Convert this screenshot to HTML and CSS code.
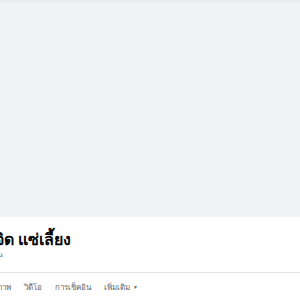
FILE: index.html
```html
<!DOCTYPE html>
<html>
<head>
    <title>เพจ</title>
    <link rel="stylesheet" href="styles.css">
</head>
<body>
    <div class="cover"></div>

    <div class="profile">
        <h1 class="name">จิด แซ่เลี้ยง</h1>
        <p class="sub">ผู้ใช้งาน</p>
    </div>

    <div class="tabs">
        <span class="tab">รูปภาพ</span>
        <span class="tab">วิดีโอ</span>
        <span class="tab">การเช็คอิน</span>
        <span class="tab">เพิ่มเติม<span class="caret">▼</span></span>
    </div>
</body>
</html>
```

FILE: styles.css
```css
body {
    margin: 0;
    background-color: #fff;
    font-family: "Noto Sans", "Liberation Sans", sans-serif;
    overflow: hidden;
}

.cover {
    height: 217px;
    background: linear-gradient(to bottom, #e9eaed 0, #f0f2f5 3px, #f0f2f5 100%);
}

.profile {
    height: 55px;
    border-bottom: 1px solid #e4e6eb;
    overflow: hidden;
}

.name {
    margin: 11px 0 0 -5px;
    font-size: 16px;
    font-weight: bold;
    color: #050505;
    line-height: 22px;
}

.sub {
    margin: -1px 0 0 -21px;
    font-size: 7px;
    color: #65676b;
    line-height: 12px;
}

.tabs {
    display: flex;
    gap: 13px;
    margin-left: -12px;
    padding-top: 8px;
    font-size: 8px;
    color: #65676b;
}

.caret {
    font-size: 5px;
    margin-left: 3px;
    vertical-align: 1px;
}
```
